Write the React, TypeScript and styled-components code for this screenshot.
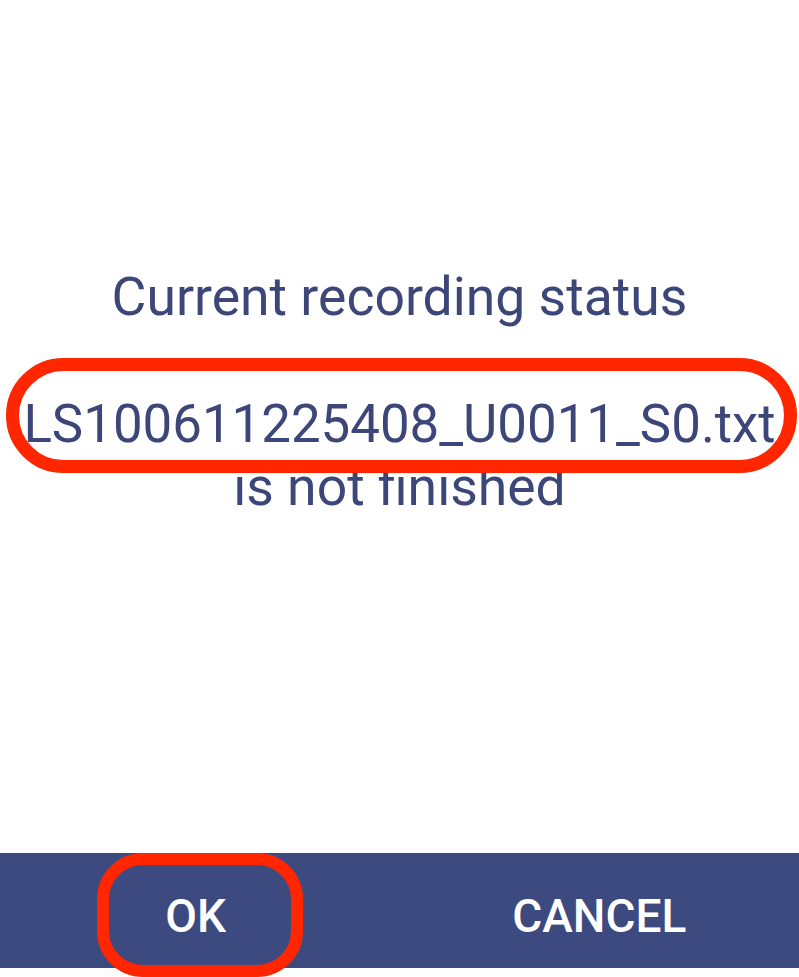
import styled, { createGlobalStyle } from "styled-components";

const GlobalStyle = createGlobalStyle`
  html, body {
    margin: 0;
    padding: 0;
    background: #ffffff;
  }
  body {
    font-family: Roboto, "Noto Sans", "Liberation Sans", sans-serif;
  }
`;

const Screen = styled.div`
  width: 799px;
  height: 977px;
  display: flex;
  flex-direction: column;
  background: #ffffff;
  overflow: hidden;
`;

const Message = styled.div`
  flex: 1;
  display: flex;
  flex-direction: column;
  align-items: center;
  padding-top: 262px;
  color: #3c4679;
  text-align: center;
`;

const Title = styled.div`
  font-size: 53.5px;
  line-height: 70px;
  margin-bottom: 61px;
`;

const FileName = styled.div`
  position: relative;
  font-size: 52.8px;
  line-height: 62px;

  &::after {
    content: "";
    position: absolute;
    top: -35px;
    bottom: -18px;
    left: -17px;
    right: -21px;
    border: 13px solid #ff2600;
    border-radius: 58px;
    pointer-events: none;
  }
`;

const Status = styled.div`
  font-size: 53.5px;
  line-height: 64px;
`;

const ButtonBar = styled.div`
  height: 115px;
  margin-bottom: 9px;
  display: flex;
  background: #3d4a80;
`;

const Slot = styled.div`
  flex: 1;
  display: flex;
  justify-content: center;
  align-items: center;
`;

const Button = styled.button<{ $marked?: boolean }>`
  position: relative;
  width: 206px;
  height: 115px;
  border: none;
  background: transparent;
  color: #ffffff;
  font-family: Roboto, "Noto Sans", "Liberation Sans", sans-serif;
  font-weight: 500;
  font-size: 46px;
  text-transform: uppercase;
  padding: 10px ${(p) => (p.$marked ? "8px" : "0")} 0 0;

  &::after {
    content: "";
    display: ${(p) => (p.$marked ? "block" : "none")};
    position: absolute;
    top: 0;
    bottom: -9px;
    left: 0;
    right: 0;
    border: 12px solid #ff2600;
    border-radius: 46px;
    pointer-events: none;
  }
`;

export default function App() {
  return (
    <>
      <GlobalStyle />
      <Screen>
        <Message>
          <Title>Current recording status</Title>
          <FileName>LS100611225408_U0011_S0.txt</FileName>
          <Status>is not finished</Status>
        </Message>
        <ButtonBar>
          <Slot>
            <Button $marked>OK</Button>
          </Slot>
          <Slot>
            <Button>Cancel</Button>
          </Slot>
        </ButtonBar>
      </Screen>
    </>
  );
}
